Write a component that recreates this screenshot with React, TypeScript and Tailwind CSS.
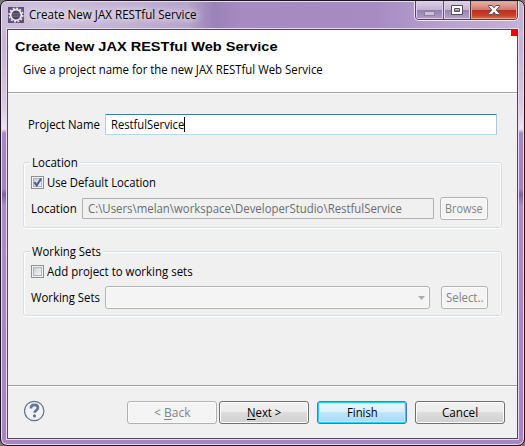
import { useLayoutEffect, useRef, useState, type ReactNode } from "react";

/** Fits a single line of text to the width of its box. */
function Fit({ className, children }: { className: string; children: ReactNode }) {
  const box = useRef<HTMLSpanElement>(null);
  const text = useRef<HTMLSpanElement>(null);
  const [scale, setScale] = useState(1);
  useLayoutEffect(() => {
    if (box.current && text.current) {
      setScale(box.current.clientWidth / text.current.offsetWidth);
    }
  }, []);
  return (
    <span ref={box} className={`block h-4 shrink-0 leading-4 whitespace-nowrap ${className}`}>
      <span ref={text} className="inline-block origin-left" style={{ transform: `scaleX(${scale})` }}>
        {children}
      </span>
    </span>
  );
}

function Group({ title, titleClass, className, children }: { title: string; titleClass: string; className: string; children: ReactNode }) {
  return (
    <section className={`ml-[15px] w-[479px] rounded-[3px] border border-[#d5dfe5] shadow-[inset_1px_1px_0_#fff,inset_-1px_0_0_#fff,0_1px_0_#fff] ${className}`}>
      <div className={`-mt-[9px] ml-[6px] flex h-[18px] items-center bg-[#f0f0f0] pl-[2px] ${titleClass}`}>
        <Fit className="w-full">{title}</Fit>
      </div>
      {children}
    </section>
  );
}

function Check({ checked }: { checked?: boolean }) {
  return (
    <span className="flex h-[13px] w-[13px] shrink-0 border border-[#8e8f8f] bg-[#f4f4f4] p-px">
      <span className="relative h-[9px] w-[9px] border border-[#aeb3b9] bg-linear-to-br from-[#cbcfd5] to-[#f6f6f6]">
        {checked && (
          <svg className="absolute -top-[2px] -left-px" width="10" height="11" viewBox="0 0 10 11">
            <path d="M1.3 5.2 3.7 8.4 8.2 1.5" fill="none" stroke="#4b5f9d" strokeWidth="2.1" />
          </svg>
        )}
      </span>
    </span>
  );
}

const disabled = "border-[#adb2b5] bg-[#f4f4f4] text-[#838383] shadow-[inset_0_0_0_1px_#fcfcfc]";
const normal = "border-[#707070] bg-[linear-gradient(#f2f2f2_0%,#ebebeb_49%,#dddddd_50%,#cfcfcf_100%)] shadow-[inset_0_0_0_1px_#fcfcfc]";
const primary = "border-[#3c7fb1] bg-[linear-gradient(#eaf6fd_0%,#d9f0fc_49%,#bee6fd_50%,#a7d9f5_100%)] shadow-[inset_0_0_0_1px_#29cffa,inset_0_0_0_2px_#b9edfd]";

function Button({ className, width, children }: { className: string; width: string; children: ReactNode }) {
  return (
    <button className={`flex h-[23px] shrink-0 items-center justify-center rounded-[3px] border ${className}`}>
      <Fit className={width}>{children}</Fit>
    </button>
  );
}

export default function App() {
  return (
    <div className="h-[446px] w-[525px] overflow-hidden bg-[#777] font-['Open_Sans','Noto_Sans',sans-serif] text-[12px] text-black">
      <div className="flex h-[446px] w-[525px] flex-col rounded-[7px] border border-[#1d1424] bg-[linear-gradient(#d3c5df_0,#c5b2d5_45px,#d9cbe1_105px,#eee4f0_128px,#a988c2_132px,#a583bd_188px,#8062a0_193px,#ad8bc5_205px,#a884c0_445px)] px-[6px] pb-[6px] shadow-[inset_0_0_0_1px_#e7dbed]">
        <header className="-mx-[5px] mt-px flex h-[28px] w-[521px] shrink-0 rounded-t-[5px] bg-[linear-gradient(90deg,#cbbad9_0,#cdbfdb_45px,#b7a5cb_185px,#9a82b6_212px,#a68bc2_240px,#a68cc3_375px,#b9a3cf_450px,#c5b1d5_521px)] pl-[6px]">
          <svg className="mt-[5px] shrink-0" width="16" height="16" viewBox="0 0 16 16">
            <rect width="16" height="16" fill="#5d4f77" />
            <circle cx="8" cy="8" r="6.8" fill="none" stroke="#e6e4e8" strokeWidth="1.6" strokeDasharray="2 1.56" />
            <circle cx="8" cy="8" r="5.3" fill="#4b4261" stroke="#f1f0f2" strokeWidth="1.7" />
            <path d="M4 6.4h8M3.6 8h8.8M4 9.6h8" stroke="#8a819c" strokeWidth=".6" />
          </svg>
          <div className="mt-[5px] ml-[5px] [text-shadow:0_0_6px_#fff,0_0_10px_#fff]">
            <Fit className="w-[168px]">Create New JAX RESTful Service</Fit>
          </div>
          <div className="-mt-px mr-[4px] ml-auto flex h-[20px] w-[105px] overflow-hidden rounded-b-[5px] border border-t-0 border-[#eee5f3]">
            <div className="flex h-full w-full overflow-hidden rounded-b-[4px] border border-t-0 border-[#514360]">
              <div className="flex w-[28px] items-center justify-center border-r border-[#605170] bg-[linear-gradient(#ded1e7_0,#c1b0d1_49%,#9580ad_50%,#b29bc9_100%)] shadow-[inset_0_0_0_1px_#ddd1e7]">
                <span className="mt-[6px] h-[5px] w-[11px] border border-[#8e809e] bg-[#ccc1d5]" />
              </div>
              <div className="flex w-[27px] items-center justify-center border-r border-[#4d3245] bg-[linear-gradient(#dfd4e7_0,#c4b5d2_49%,#9784ad_50%,#b6a2c8_100%)] shadow-[inset_0_0_0_1px_#ddd1e7]">
                <svg width="12" height="10" viewBox="0 0 12 10">
                  <path d="M.5.5h11v9H.5zM3.5 3.5v3h5v-3z" fill="#fff" fillRule="evenodd" stroke="#534d62" />
                </svg>
              </div>
              <div className="flex flex-1 items-center justify-center bg-[linear-gradient(#e6b7aa_0,#cf7a6c_48%,#b92e20_50%,#ce3e28_80%,#de7958_100%)] shadow-[inset_0_0_0_1px_#e3a08f]">
                <svg width="12" height="10" viewBox="0 0 12 10">
                  <path d="M.5.5h3.6L6 2.8 7.9.5h3.6v1L8.2 5l3.3 3.5v1H7.9L6 7.2 4.1 9.5H.5v-1L3.8 5 .5 1.5z" fill="#f8f8f8" stroke="#59515e" />
                </svg>
              </div>
            </div>
          </div>
        </header>

        <main className="relative -mt-px flex h-[410px] w-[511px] shrink-0 flex-col border border-[#55445f] bg-[#f0f0f0] shadow-[0_0_0_1px_#e5d9ec]">
          <span className="absolute top-0 right-0 h-[6px] w-[6px] bg-[#f00]" />
          <div className="h-[63px] shrink-0 border-b border-[#a0a0a0] bg-white pt-[9px]">
            <h1 className="ml-[7px] font-['Liberation_Sans',Arial,sans-serif] text-[13.5px] font-bold">
              <Fit className="w-[263px]">Create New JAX RESTful Web Service</Fit>
            </h1>
            <p className="mt-[7px] ml-[15px]">
              <Fit className="w-[300px]">Give a project name for the new JAX RESTful Web Service</Fit>
            </p>
          </div>
          <div className="h-px shrink-0 bg-white" />

          <div className="mt-[20px] flex h-[21px] shrink-0 items-center pl-[20px]">
            <Fit className="w-[72px]">Project Name</Fit>
            <div className="ml-[5px] flex h-[21px] w-[392px] items-center rounded-[1px] border border-t-[#3d7bad] border-r-[#a4c9e3] border-b-[#b7d9ed] border-l-[#b5cfe7] bg-white pl-[5px]">
              <Fit className="w-[73px]">RestfulService</Fit>
              <span className="h-[15px] w-px bg-black" />
            </div>
          </div>

          <Group title="Location" titleClass="w-[50px] pr-[2px]" className="mt-[27px] h-[66px] shrink-0">
            <div className="mt-[4px] flex h-[13px] items-center gap-[3px] pl-[7px]">
              <Check checked />
              <Fit className="w-[109px]">Use Default Location</Fit>
            </div>
            <div className="mt-[8px] flex h-[23px] items-center pl-[7px]">
              <Fit className="w-[46px]">Location</Fit>
              <div className="ml-[5px] flex h-[21px] w-[352px] items-center rounded-[1px] border border-[#afafaf] pl-[5px] text-[#6d6d6d]">
                <Fit className="w-[314px]">{"C:\\Users\\melan\\workspace\\DeveloperStudio\\RestfulService"}</Fit>
              </div>
              <Button className={`ml-[6px] w-[48px] ${disabled}`} width="w-[38px]">Browse</Button>
            </div>
          </Group>

          <Group title="Working Sets" titleClass="w-[73px] pr-[2px]" className="mt-[23px] h-[65px] shrink-0">
            <div className="mt-[4px] flex h-[13px] items-center gap-[3px] pl-[7px]">
              <Check />
              <Fit className="w-[146px]">Add project to working sets</Fit>
            </div>
            <div className="mt-[8px] flex h-[23px] items-center pl-[7px]">
              <Fit className="w-[69px]">Working Sets</Fit>
              <div className="ml-[5px] flex h-[23px] w-[325px] items-center justify-end rounded-[3px] border border-[#adb2b5] bg-[#f4f4f4] pr-[4px] shadow-[inset_0_0_0_1px_#fcfcfc]">
                <svg width="7" height="4" viewBox="0 0 7 4">
                  <path d="M0 0h7L3.5 4z" fill="#a7abae" />
                </svg>
              </div>
              <Button className={`ml-[11px] w-[47px] ${disabled}`} width="w-[37px]">Select..</Button>
            </div>
          </Group>

          <footer className="mt-auto flex h-[53px] shrink-0 items-start border-t border-[#a0a0a0] pt-[15px] pl-[16px] shadow-[inset_0_1px_0_#fff]">
            <svg className="-mt-px shrink-0" width="21" height="22" viewBox="0 0 21 22">
              <circle cx="10.2" cy="11" r="9.7" fill="#f2f3f5" stroke="#64748f" strokeWidth="1.2" />
              <path d="M6.9 8.4C6.9 5.6 8.2 4.9 10.4 4.9c2 0 3.5 1.1 3.5 2.9 0 2.7-3.3 2.5-3.3 5" fill="none" stroke="#657697" strokeWidth="2.7" />
              <circle cx="10.5" cy="15.9" r="1.6" fill="#657697" />
            </svg>
            <Button className={`ml-[82px] w-[90px] ${disabled}`} width="w-[36px]">
              &lt; <u className="underline-offset-2">B</u>ack
            </Button>
            <Button className={`ml-[2px] w-[90px] ${normal}`} width="w-[34px]">
              <u className="underline-offset-2">N</u>ext &gt;
            </Button>
            <Button className={`ml-[8px] w-[90px] ${primary}`} width="w-[31px]">Finish</Button>
            <Button className={`ml-[8px] w-[90px] ${normal}`} width="w-[36px]">Cancel</Button>
          </footer>
        </main>
      </div>
    </div>
  );
}
